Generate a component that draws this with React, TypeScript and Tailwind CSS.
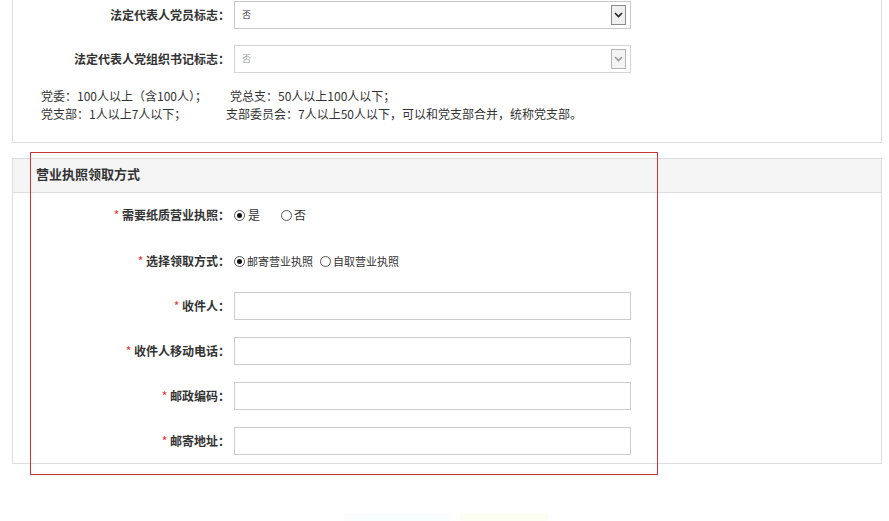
import React from "react";

const font = { fontFamily: '"Noto Sans CJK SC", "Liberation Sans", sans-serif' };

function Arrow({ disabled }: { disabled?: boolean }) {
  return (
    <span
      className={`mr-[4px] flex h-[20px] w-[15px] items-center justify-center border ${
        disabled ? "border-[#b5b5b5] bg-[#f4f4f4]" : "border-[#8a8a8a] bg-[#f0f0f0]"
      }`}
    >
      <svg width="9" height="6" viewBox="0 0 9 6">
        <path
          d="M1 1 L4.5 4.5 L8 1"
          fill="none"
          stroke={disabled ? "#9a9a9a" : "#222"}
          strokeWidth="1.6"
        />
      </svg>
    </span>
  );
}

function SelectRow({ label, disabled, mt }: { label: string; disabled?: boolean; mt: string }) {
  return (
    <div className={`flex h-[28px] items-center ${mt}`}>
      <div className="w-[217px] text-right text-[12px] font-bold text-[#333]">{label}</div>
      <div
        className={`ml-[4px] flex h-[28px] w-[397px] items-center justify-between border ${
          disabled ? "border-[#d4d4d4]" : "border-[#c8c8c8]"
        } bg-white`}
      >
        <span className={`pl-[7px] text-[9px] ${disabled ? "text-[#999]" : "text-[#333]"}`}>否</span>
        <Arrow disabled={disabled} />
      </div>
    </div>
  );
}

function Radio({ checked }: { checked?: boolean }) {
  return (
    <span className="flex h-[11px] w-[11px] items-center justify-center rounded-full border border-[#555] bg-white">
      {checked && <span className="h-[5px] w-[5px] rounded-full bg-[#111]" />}
    </span>
  );
}

function Label({ text }: { text: string }) {
  return (
    <div className="w-[217px] text-right text-[12px] font-bold text-[#333]">
      <span className="font-normal text-[#e33]">*</span> {text}
    </div>
  );
}

function InputRow({ text, mt }: { text: string; mt: string }) {
  return (
    <div className={`flex h-[28px] items-center ${mt}`}>
      <Label text={text} />
      <div className="ml-[4px] h-[28px] w-[397px] border border-[#cccccc] bg-white" />
    </div>
  );
}

export default function App() {
  return (
    <div className="relative h-[521px] w-[889px] overflow-hidden bg-white" style={font}>
      {/* top panel */}
      <div className="ml-[12px] w-[870px] border-x border-b border-[#dddddd] pb-[19px] pt-[1px]">
        <SelectRow label="法定代表人党员标志：" mt="" />
        <SelectRow label="法定代表人党组织书记标志：" disabled mt="mt-[16px]" />
        <div className="mt-[14px] pl-[28px] text-[12px] leading-[18px] text-[#333]">
          <div className="flex">
            <span className="w-[189px]">党委：100人以上（含100人）；</span>
            <span>党总支：50人以上100人以下；</span>
          </div>
          <div className="flex">
            <span className="w-[185px]">党支部：1人以上7人以下；</span>
            <span>支部委员会：7人以上50人以下，可以和党支部合并，统称党支部。</span>
          </div>
        </div>
      </div>

      {/* second panel */}
      <div className="ml-[12px] mt-[15px] w-[870px] border border-[#dddddd]">
        <div className="flex h-[34px] items-center border-b border-[#dddddd] bg-[#f5f5f5] pb-[4px] pl-[23px] text-[13px] font-bold text-[#333]">
          营业执照领取方式
        </div>
        <div className="pb-[8px] pt-[8px]">
          <div className="flex h-[28px] items-center">
            <Label text="需要纸质营业执照：" />
            <div className="ml-[4px] flex items-center text-[12px] text-[#333]">
              <Radio checked />
              <span className="ml-[3px]">是</span>
              <span className="ml-[21px]">
                <Radio />
              </span>
              <span className="ml-[2px]">否</span>
            </div>
          </div>
          <div className="mt-[18px] flex h-[28px] items-center">
            <Label text="选择领取方式：" />
            <div className="ml-[4px] flex items-center text-[11px] text-[#333]">
              <Radio checked />
              <span className="ml-[2px]">邮寄营业执照</span>
              <span className="ml-[7px]">
                <Radio />
              </span>
              <span className="ml-[2px]">自取营业执照</span>
            </div>
          </div>
          <InputRow text="收件人：" mt="mt-[17px]" />
          <InputRow text="收件人移动电话：" mt="mt-[17px]" />
          <InputRow text="邮政编码：" mt="mt-[17px]" />
          <InputRow text="邮寄地址：" mt="mt-[17px]" />
        </div>
      </div>

      {/* faint button tops */}
      <div className="ml-[344px] mt-[49px] flex gap-[10px]">
        <div className="h-[10px] w-[106px] bg-[#f9fdfd]" />
        <div className="h-[10px] w-[88px] bg-[#fdfef3]" />
      </div>

      {/* red annotation */}
      <div className="pointer-events-none absolute left-[30px] top-[152px] h-[323px] w-[628px] border border-[#c8343a]" />
    </div>
  );
}
